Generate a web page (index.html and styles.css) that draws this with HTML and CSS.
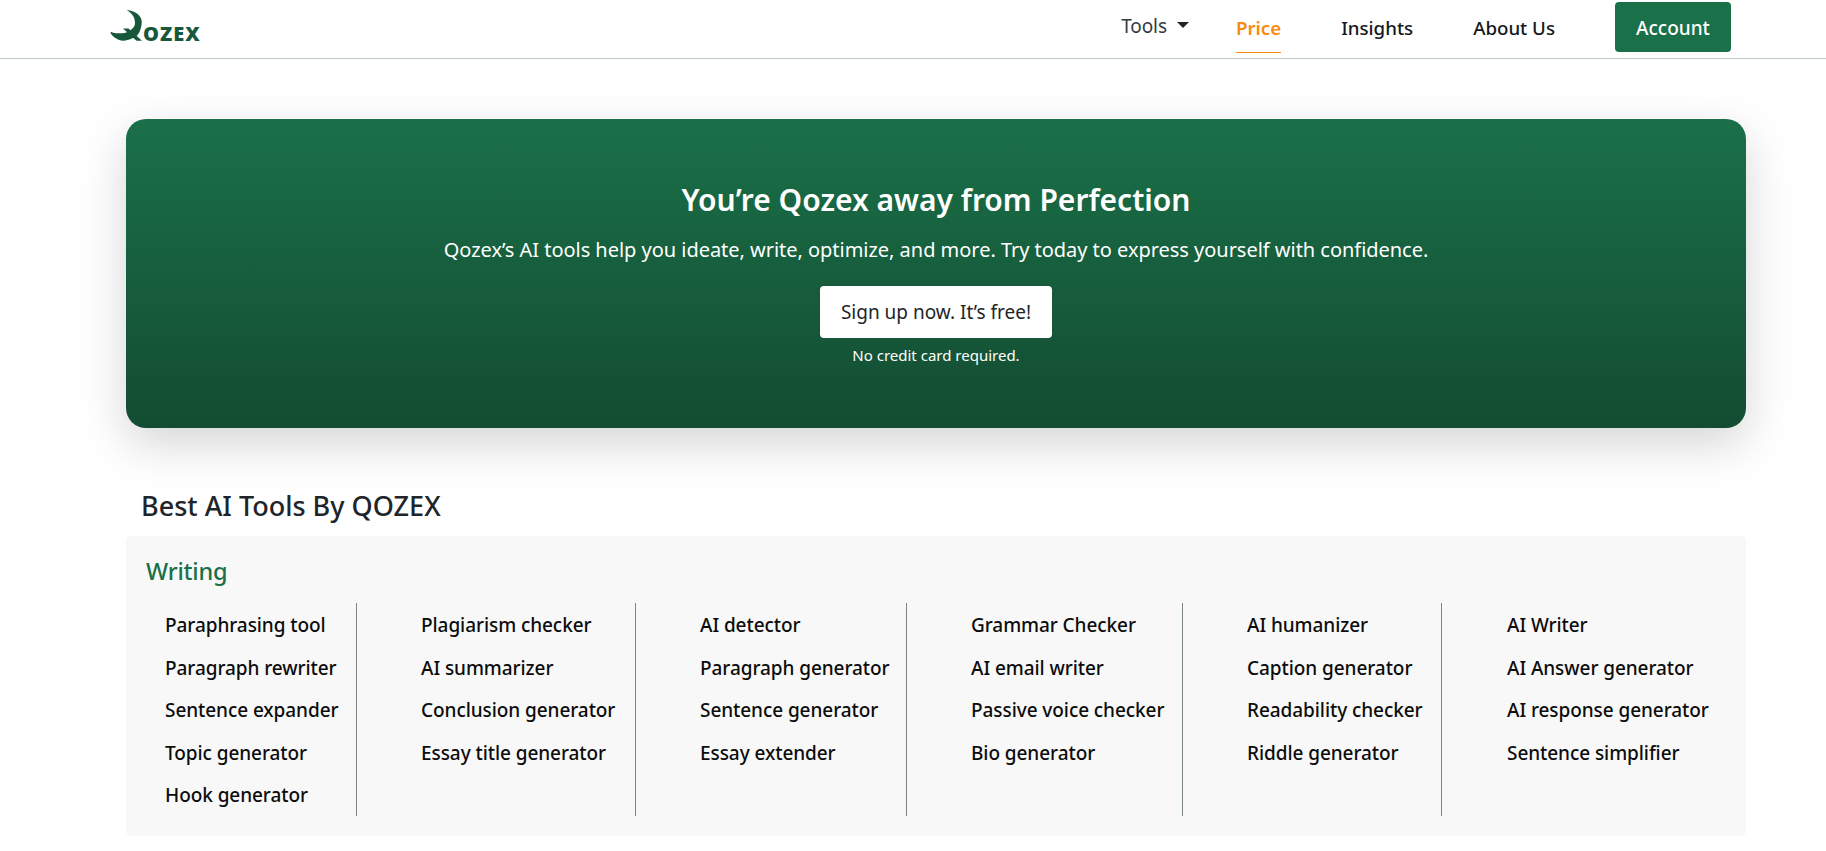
FILE: index.html
```html
<!DOCTYPE html>
<html lang="en">
<head>
<meta charset="utf-8">
<title>Qozex</title>
<link rel="stylesheet" href="styles.css">
</head>
<body>
<header class="nav">
  <a class="logo" href="#">
    <svg class="logo-mark" width="33" height="33" viewBox="0 0 33 33">
      <path d="M16.700 0 C26 1 32.500 6 31.700 13.300 C31 22 27 27 23 28 C19 30 16 30.700 13 30.700 C8 30.700 3 27 .7 23.300 L.7 21.700 C3 23 5.500 23.300 8 23.300 C12 23.500 15.500 23 18 21.700 C22 19.500 25 17 25 13.300 C25 8 23 4 16.700 0 Z" fill="#17583a"/>
      <path d="M13 18.500 L18.500 18.500 L32 30.700 L26.500 30.700 Z" fill="#17583a"/>
    </svg>
    <span class="logo-text">OZEX</span>
  </a>
  <nav class="menu">
    <a class="tools" href="#">Tools<span class="caret"></span></a>
    <a class="link active" href="#">Price</a>
    <a class="link" href="#">Insights</a>
    <a class="link" href="#">About Us</a>
    <a class="account" href="#">Account</a>
  </nav>
</header>
<main class="page">
  <section class="hero">
    <h1>You’re Qozex away from Perfection</h1>
    <p class="lead">Qozex’s AI tools help you ideate, write, optimize, and more. Try today to express yourself with confidence.</p>
    <a class="cta" href="#">Sign up now. It’s free!</a>
    <p class="note">No credit card required.</p>
  </section>
  <h2 class="best">Best AI Tools By QOZEX</h2>
  <section class="panel">
    <h3>Writing</h3>
    <div class="cols">
      <ul class="col c1"><li>Paraphrasing tool</li><li>Paragraph rewriter</li><li>Sentence expander</li><li>Topic generator</li><li>Hook generator</li></ul>
      <ul class="col c2"><li>Plagiarism checker</li><li>AI summarizer</li><li>Conclusion generator</li><li>Essay title generator</li></ul>
      <ul class="col c3"><li>AI detector</li><li>Paragraph generator</li><li>Sentence generator</li><li>Essay extender</li></ul>
      <ul class="col c4"><li>Grammar Checker</li><li>AI email writer</li><li>Passive voice checker</li><li>Bio generator</li></ul>
      <ul class="col c5"><li>AI humanizer</li><li>Caption generator</li><li>Readability checker</li><li>Riddle generator</li></ul>
      <ul class="col c6"><li>AI Writer</li><li>AI Answer generator</li><li>AI response generator</li><li>Sentence simplifier</li></ul>
    </div>
  </section>
</main>
</body>
</html>
```
FILE: styles.css
```css
* { box-sizing: border-box; }
html, body { margin: 0; height: 851px; overflow: hidden; }
body { background: #fff; color: #212529; font-family: "Noto Sans", "Open Sans", sans-serif; }
a { text-decoration: none; color: inherit; }

.nav { height: 59px; border-bottom: 1px solid #bccdc6; display: flex; justify-content: space-between; padding: 0 95px 0 110px; }
.logo { display: flex; align-items: flex-start; }
.logo-mark { margin-top: 10px; flex: none; }
.logo-text { font-family: "Open Sans", sans-serif; font-weight: 800; font-size: 20px; line-height: 22px; color: #17583a; margin-top: 23px; letter-spacing: 1px; }
.menu { display: flex; align-items: flex-start; height: 58px; }
.tools { display: flex; align-items: center; height: 52px; font-size: 19px; color: #343a40; margin-right: 47px; letter-spacing: -.1px; }
.caret { width: 0; height: 0; border-left: 6px solid transparent; border-right: 6px solid transparent; border-top: 6px solid #212529; margin-left: 10px; margin-top: -2px; }
.link { font-size: 18.700px; font-weight: 500; color: #14181c; margin-right: 60px; height: 53px; padding-top: 3px; line-height: 50px; }
.link.active { color: #f98b0e; font-weight: 600; border-bottom: 1px solid #f98b0e; }
.account { background: #1a7049; color: #fff; font-size: 19px; font-weight: 500; width: 116px; height: 50px; margin-top: 2px; line-height: 52px; text-align: center; border-radius: 4px; }

.page { padding: 60px 80px 0 126px; }
.hero { height: 309px; border-radius: 20px; background: linear-gradient(180deg, #1a7049, #134c31); color: #fff; text-align: center; box-shadow: 0 16px 48px rgba(0,0,0,.17); padding-top: 61px; }
.hero h1 { margin: 0; font-size: 30px; line-height: 40px; font-weight: 600; }
.lead { margin: 16px 0 0; font-size: 20px; line-height: 28px; letter-spacing: -.03px; }
.cta { display: block; width: 232px; height: 52px; line-height: 52px; margin: 22px auto 0; background: #fff; color: #212529; border-radius: 4px; font-size: 19px; }
.note { margin: 7px 0 0; font-size: 15px; line-height: 20px; }

.best { margin: 60px 0 0 15px; font-size: 27px; line-height: 36px; font-weight: 500; }
.panel { margin-top: 12px; height: 300px; background: #f8f8f8; border-radius: 5px; padding: 20px 20px 0; }
.panel h3 { margin: 0; font-size: 23.500px; line-height: 30px; font-weight: 500; color: #1a7049; letter-spacing: -.2px; }
.cols { display: flex; margin-top: 17px; }
.col { list-style: none; margin: 0; height: 213px; padding: 0; border-right: 1px solid #7b8583; font-size: 19px; font-weight: 500; color: #0c0c0c; letter-spacing: -.07px; flex: none; }
.col li { height: 42.500px; line-height: 42.500px; white-space: nowrap; position: relative; top: 1px; }
.c1 { width: 211px; padding-left: 19px; }
.c2 { width: 279px; padding-left: 64px; }
.c3 { width: 271px; padding-left: 64px; }
.c4 { width: 276px; padding-left: 64px; }
.c5 { width: 259px; padding-left: 64px; }
.c6 { border-right: 0; padding-left: 65px; }
```
